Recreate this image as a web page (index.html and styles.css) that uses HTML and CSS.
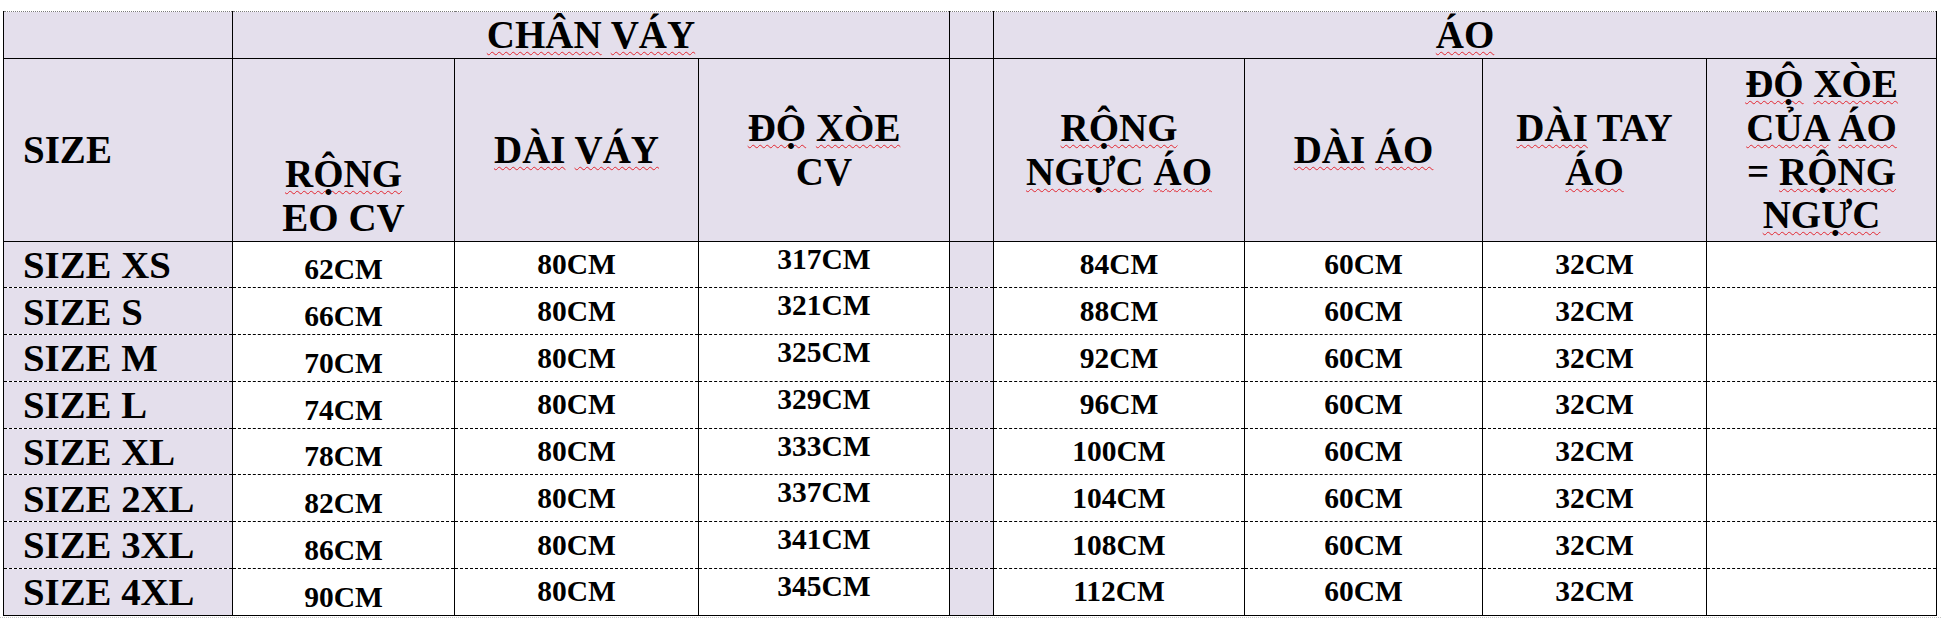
FILE: index.html
```html
<!DOCTYPE html>
<html lang="vi">
<head>
<meta charset="utf-8">
<title>Bảng size</title>
<link rel="stylesheet" href="styles.css">
</head>
<body>
<table class="size-table">
  <colgroup>
    <col class="c-size">
    <col class="c-eo">
    <col class="c-dai">
    <col class="c-xoe">
    <col class="c-gap">
    <col class="c-nguc">
    <col class="c-daiao">
    <col class="c-tay">
    <col class="c-xoeao">
  </colgroup>
  <tr class="r-group">
    <td class="hd"></td>
    <td class="hd group" colspan="3"><span class="sp">CHÂN</span> <span class="sp">VÁY</span></td>
    <td class="hd"></td>
    <td class="hd group" colspan="4"><span class="sp">ÁO</span></td>
  </tr>
  <tr class="r-head">
    <td class="hd size-h">SIZE</td>
    <td class="hd v-bottom"><span class="sp">RỘNG</span><br>EO CV</td>
    <td class="hd"><span class="sp">DÀI</span> <span class="sp">VÁY</span></td>
    <td class="hd"><span class="sp">ĐỘ</span> <span class="sp">XÒE</span><br>CV</td>
    <td class="hd"></td>
    <td class="hd"><span class="sp">RỘNG</span><br><span class="sp">NGỰC</span> <span class="sp">ÁO</span></td>
    <td class="hd"><span class="sp">DÀI</span> <span class="sp">ÁO</span></td>
    <td class="hd"><span class="sp">DÀI</span> TAY<br><span class="sp">ÁO</span></td>
    <td class="hd"><span class="sp">ĐỘ</span> <span class="sp">XÒE</span><br><span class="sp">CỦA</span> <span class="sp">ÁO</span><br>= <span class="sp">RỘNG</span><br><span class="sp">NGỰC</span></td>
  </tr>
  <tr class="r-data">
    <td class="size">SIZE XS</td><td class="v-bottom">62CM</td><td>80CM</td><td class="v-top">317CM</td><td class="gap"></td><td>84CM</td><td>60CM</td><td>32CM</td><td></td>
  </tr>
  <tr class="r-data">
    <td class="size">SIZE S</td><td class="v-bottom">66CM</td><td>80CM</td><td class="v-top">321CM</td><td class="gap"></td><td>88CM</td><td>60CM</td><td>32CM</td><td></td>
  </tr>
  <tr class="r-data">
    <td class="size">SIZE M</td><td class="v-bottom">70CM</td><td>80CM</td><td class="v-top">325CM</td><td class="gap"></td><td>92CM</td><td>60CM</td><td>32CM</td><td></td>
  </tr>
  <tr class="r-data">
    <td class="size">SIZE L</td><td class="v-bottom">74CM</td><td>80CM</td><td class="v-top">329CM</td><td class="gap"></td><td>96CM</td><td>60CM</td><td>32CM</td><td></td>
  </tr>
  <tr class="r-data">
    <td class="size">SIZE XL</td><td class="v-bottom">78CM</td><td>80CM</td><td class="v-top">333CM</td><td class="gap"></td><td>100CM</td><td>60CM</td><td>32CM</td><td></td>
  </tr>
  <tr class="r-data">
    <td class="size">SIZE 2XL</td><td class="v-bottom">82CM</td><td>80CM</td><td class="v-top">337CM</td><td class="gap"></td><td>104CM</td><td>60CM</td><td>32CM</td><td></td>
  </tr>
  <tr class="r-data">
    <td class="size">SIZE 3XL</td><td class="v-bottom">86CM</td><td>80CM</td><td class="v-top">341CM</td><td class="gap"></td><td>108CM</td><td>60CM</td><td>32CM</td><td></td>
  </tr>
  <tr class="r-data r-last">
    <td class="size">SIZE 4XL</td><td class="v-bottom">90CM</td><td>80CM</td><td class="v-top">345CM</td><td class="gap"></td><td>112CM</td><td>60CM</td><td>32CM</td><td></td>
  </tr>
</table>
<div class="gridline"></div>
</body>
</html>
```

FILE: styles.css
```css
html, body {
  margin: 0;
  padding: 0;
  background: #ffffff;
}

body {
  padding-top: 11px;
  font-family: "Liberation Serif", "Times New Roman", serif;
  font-weight: bold;
  color: #000;
}

.size-table {
  margin-left: 3px;
  width: 1934px;
  table-layout: fixed;
  border-collapse: collapse;
}

.c-size  { width: 229px; }
.c-eo    { width: 222px; }
.c-dai   { width: 244px; }
.c-xoe   { width: 251px; }
.c-gap   { width: 44px; }
.c-nguc  { width: 251px; }
.c-daiao { width: 238px; }
.c-tay   { width: 224px; }
.c-xoeao { width: 230px; }

.size-table td {
  padding: 1px 2px;
  border-left: 1px solid #000;
  border-right: 1px solid #000;
  text-align: center;
  vertical-align: middle;
  line-height: 1.12;
  white-space: nowrap;
  overflow: hidden;
}

.r-group { height: 46px; }
.r-head  { height: 183px; }
.r-data  { height: 46.75px; }

.r-group td {
  border-top: 1px dotted #7a7a7a;
  border-bottom: 1px solid #000;
  vertical-align: bottom;
}

.r-head td {
  border-bottom: 1px solid #000;
}

.hd {
  background: #e4dfec;
  font-size: 39px;
}

.size-h {
  text-align: left !important;
  padding-left: 19px !important;
}

.r-data td {
  font-size: 29.5px;
  background: #ffffff;
  border-bottom: 1px dashed #000;
}

.r-last td {
  border-bottom: 1px solid #000;
}

.r-data td.size {
  background: #e4dfec;
  font-size: 38.8px;
  text-align: left;
  padding-left: 19px;
}

.r-data td.gap {
  background: #e4dfec;
}

.size-table td.v-bottom { vertical-align: bottom; }
.size-table td.v-top    { vertical-align: top; }

.sp {
  text-decoration-line: underline;
  text-decoration-style: wavy;
  text-decoration-color: #e2262f;
  text-decoration-thickness: 1px;
  text-underline-offset: 3px;
  text-decoration-skip-ink: none;
}

.gridline {
  margin-top: 1px;
  border-top: 1px dotted #c4c4c4;
}
```
